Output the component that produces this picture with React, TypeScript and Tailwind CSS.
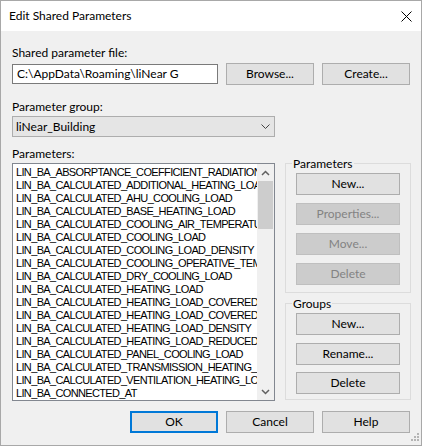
import React from "react";

const items = [
  "LIN_BA_ABSORPTANCE_COEFFICIENT_RADIATION",
  "LIN_BA_CALCULATED_ADDITIONAL_HEATING_LOAD",
  "LIN_BA_CALCULATED_AHU_COOLING_LOAD",
  "LIN_BA_CALCULATED_BASE_HEATING_LOAD",
  "LIN_BA_CALCULATED_COOLING_AIR_TEMPERATURE",
  "LIN_BA_CALCULATED_COOLING_LOAD",
  "LIN_BA_CALCULATED_COOLING_LOAD_DENSITY",
  "LIN_BA_CALCULATED_COOLING_OPERATIVE_TEMPERATURE",
  "LIN_BA_CALCULATED_DRY_COOLING_LOAD",
  "LIN_BA_CALCULATED_HEATING_LOAD",
  "LIN_BA_CALCULATED_HEATING_LOAD_COVERED_BY_AHU",
  "LIN_BA_CALCULATED_HEATING_LOAD_COVERED_BY_PANEL",
  "LIN_BA_CALCULATED_HEATING_LOAD_DENSITY",
  "LIN_BA_CALCULATED_HEATING_LOAD_REDUCED",
  "LIN_BA_CALCULATED_PANEL_COOLING_LOAD",
  "LIN_BA_CALCULATED_TRANSMISSION_HEATING_LOAD",
  "LIN_BA_CALCULATED_VENTILATION_HEATING_LOAD",
  "LIN_BA_CONNECTED_AT",
];

const ui = "font-['Segoe_UI','Lato','Noto_Sans',sans-serif] text-[12px]";

function Btn({
  children,
  disabled,
  def,
  className = "",
}: {
  children: React.ReactNode;
  disabled?: boolean;
  def?: boolean;
  className?: string;
}) {
  const base =
    "flex items-center justify-center h-[22px] leading-none " + ui + " ";
  if (disabled)
    return (
      <div className={base + "bg-[#cccccc] border border-[#bfbfbf] text-[#838383] " + className}>
        {children}
      </div>
    );
  if (def)
    return (
      <div className={base + "bg-[#e1e1e1] border-2 border-[#0078d7] text-black " + className}>
        {children}
      </div>
    );
  return (
    <div className={base + "bg-[#e1e1e1] border border-[#adadad] text-black " + className}>
      {children}
    </div>
  );
}

function Chevron({ up }: { up?: boolean }) {
  return (
    <svg width="9" height="6" viewBox="0 0 9 6">
      <path
        d={up ? "M1 5 L4.5 1.5 L8 5" : "M1 1 L4.5 4.5 L8 1"}
        fill="none"
        stroke="#606060"
        strokeWidth="1.5"
      />
    </svg>
  );
}

export default function App() {
  return (
    <div className="relative w-[422px] h-[446px] box-border border border-[#a8a8a8] bg-[#f0f0f0] flex flex-col text-black">
      {/* Title bar */}
      <div className="h-[30px] bg-white flex items-center justify-between pl-[8px] pr-[9px] shrink-0">
        <span className={ui + " leading-none"}>Edit Shared Parameters</span>
        <svg width="11" height="11" viewBox="0 0 11 11">
          <path d="M0.5 0.5 L10.5 10.5 M10.5 0.5 L0.5 10.5" stroke="#000" strokeWidth="1" />
        </svg>
      </div>

      <div className="flex flex-col pl-[11px] pr-[11px]">
        <div className={ui + " leading-[15px] mt-[14px]"}>Shared parameter file:</div>
        <div className="flex items-center mt-[3px] h-[21px] gap-[8px]">
          <div className={"w-[206px] h-[20px] bg-white border border-[#7a7a7a] flex items-center pl-[4px] leading-none " + ui}>
            C:\AppData\Roaming\liNear G
          </div>
          <Btn className="w-[88px] h-[21px]">Browse...</Btn>
          <Btn className="w-[88px] h-[21px]">Create...</Btn>
        </div>

        <div className={ui + " leading-[15px] mt-[15px]"}>Parameter group:</div>
        <div className="mt-[2px] w-[263px] h-[21px] bg-[#e5e5e5] border border-[#adadad] flex items-center justify-between pl-[3px] pr-[4px]">
          <span className={ui + " leading-none"}>liNear_Building</span>
          <svg width="9" height="5" viewBox="0 0 9 5">
            <path d="M0.5 0.5 L4.5 4.5 L8.5 0.5" fill="none" stroke="#444" strokeWidth="1" />
          </svg>
        </div>

        <div className="flex mt-[9px] gap-[10px]">
          {/* Left column */}
          <div className="flex flex-col w-[263px]">
            <div className={ui + " leading-[15px]"}>Parameters:</div>
            <div className="mt-[2px] h-[238px] bg-white border border-[#828790] flex">
              <div className="flex-1 overflow-hidden pt-[2px] pl-[3px]">
                {items.map((t) => (
                  <div
                    key={t}
                    className="h-[13px] leading-[13px] whitespace-nowrap font-['Liberation_Sans',Arial,sans-serif] text-[11px] tracking-[-0.65px] text-black"
                  >
                    {t}
                  </div>
                ))}
              </div>
              <div className="w-[17px] bg-[#f0f0f0] flex flex-col">
                <div className="h-[17px] flex items-center justify-center">
                  <Chevron up />
                </div>
                <div className="h-[48px] mx-[1px] bg-[#cdcdcd]" />
                <div className="flex-1" />
                <div className="h-[17px] flex items-center justify-center">
                  <Chevron />
                </div>
              </div>
            </div>
          </div>

          {/* Right column */}
          <div className="flex flex-col w-[126px] mr-[-1px]">
            <fieldset className="mt-[9.5px] border border-[#dcdcdc] pl-[6px] pr-[6px] pb-[7px]">
              <legend className={ui + " leading-[15px] px-[1px]"}>Parameters</legend>
              <div className="flex flex-col gap-[8px] ml-[4px] w-[104px] pt-[2.5px]">
                <Btn>New...</Btn>
                <Btn disabled>Properties...</Btn>
                <Btn disabled>Move...</Btn>
                <Btn disabled>Delete</Btn>
              </div>
            </fieldset>
            <fieldset className="mt-[2.5px] border border-[#dcdcdc] pl-[6px] pr-[6px] pb-[5px]">
              <legend className={ui + " leading-[15px] px-[1px]"}>Groups</legend>
              <div className="flex flex-col gap-[7.5px] ml-[4px] w-[104px] pt-[2.5px]">
                <Btn>New...</Btn>
                <Btn>Rename...</Btn>
                <Btn>Delete</Btn>
              </div>
            </fieldset>
          </div>
        </div>

        <div className="flex justify-end gap-[8px] mt-[10px]">
          <Btn def className="w-[88px]">OK</Btn>
          <Btn className="w-[88px]">Cancel</Btn>
          <Btn className="w-[88px]">Help</Btn>
        </div>
      </div>

      {/* resize grip */}
      <svg className="absolute right-[1px] bottom-[3px]" width="10" height="10" viewBox="0 0 10 10">
        <rect x="7" y="1" width="2" height="2" fill="#b4b4b4" />
        <rect x="4" y="4" width="2" height="2" fill="#b4b4b4" />
        <rect x="7" y="4" width="2" height="2" fill="#b4b4b4" />
        <rect x="1" y="7" width="2" height="2" fill="#b4b4b4" />
        <rect x="4" y="7" width="2" height="2" fill="#b4b4b4" />
        <rect x="7" y="7" width="2" height="2" fill="#b4b4b4" />
      </svg>
    </div>
  );
}
